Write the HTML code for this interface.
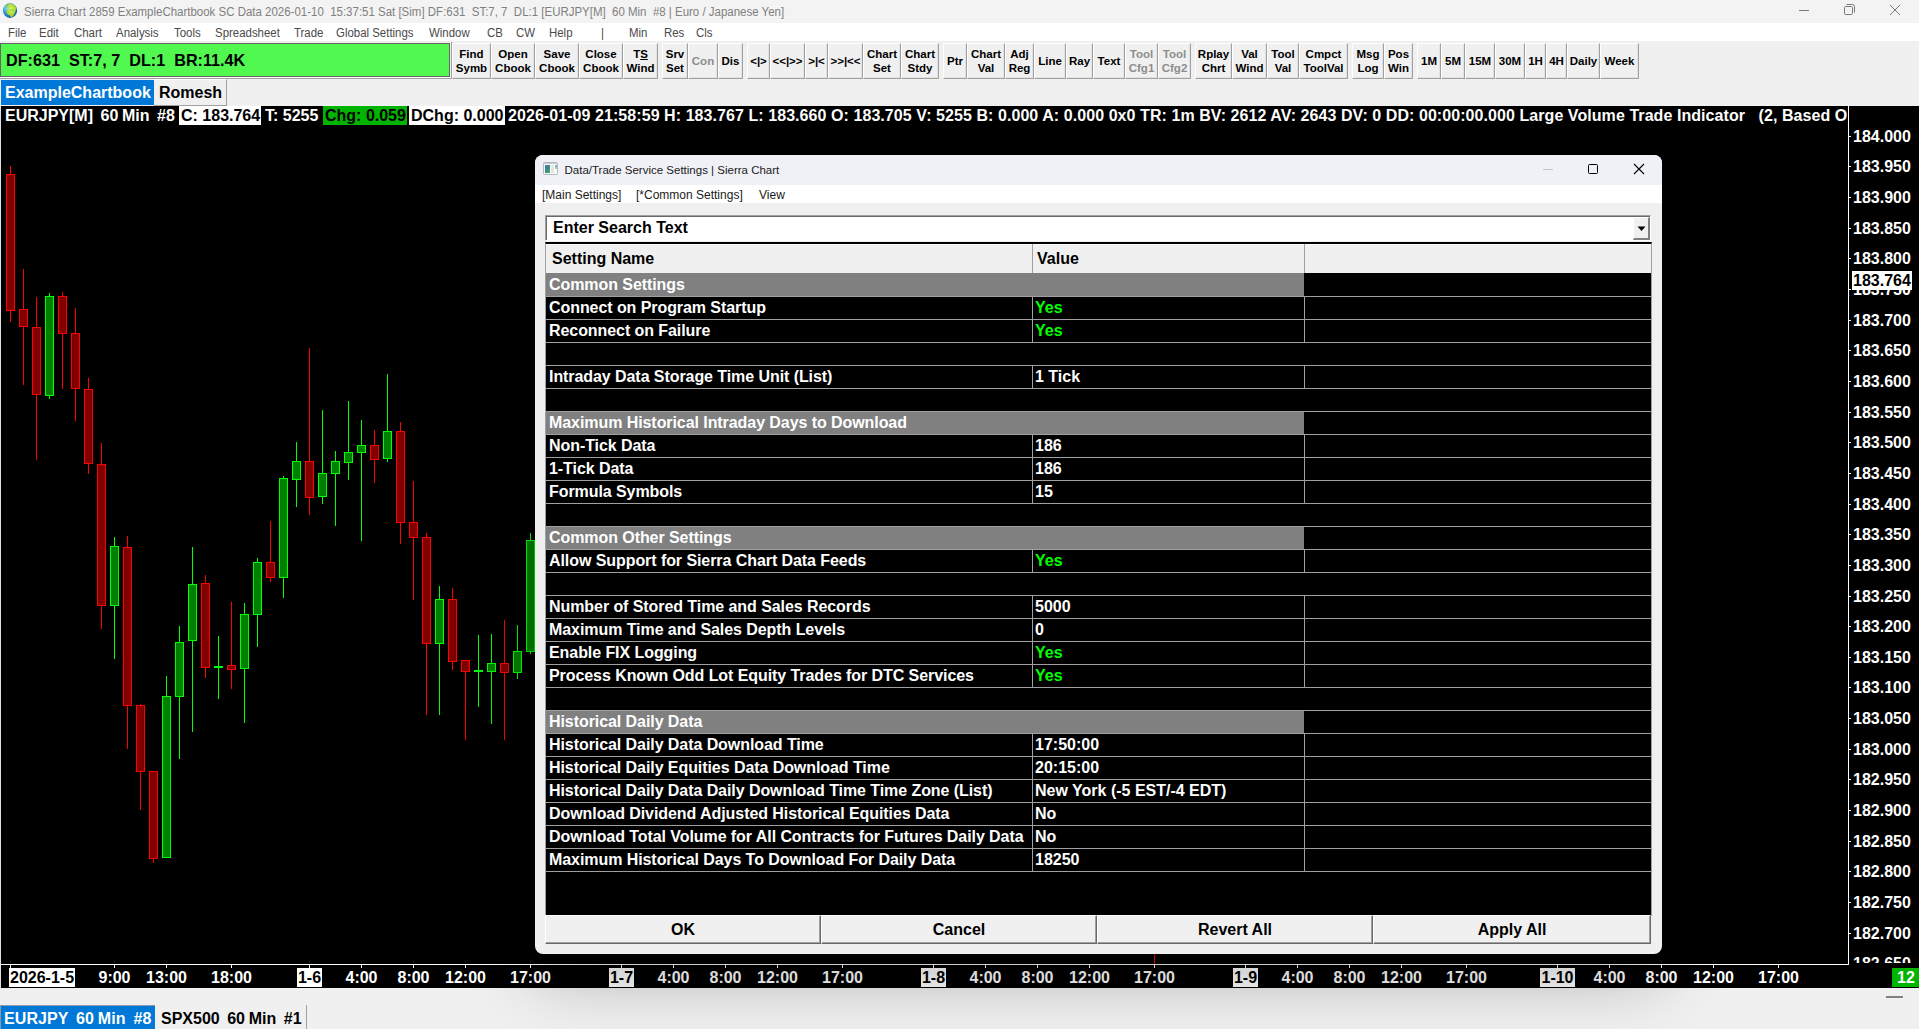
<!DOCTYPE html><html><head><meta charset="utf-8"><style>
*{margin:0;padding:0;box-sizing:border-box}
html,body{width:1919px;height:1029px;overflow:hidden;background:#f0f0f0;font-family:"Liberation Sans",sans-serif}
.a{position:absolute;white-space:pre}
.b{font-weight:bold}
.tb{position:absolute;top:43px;height:36px;background:#f0f0f0;border-left:1px solid #fff;border-top:1px solid #fff;border-right:1px solid #a0a0a0;border-bottom:1px solid #a0a0a0;box-shadow:inset -1px -1px 0 #e3e3e3;font:bold 11.5px/13.3px "Liberation Sans",sans-serif;color:#000;text-align:center;padding-top:1px;display:flex;align-items:center;justify-content:center}
.tb.g{color:#8d8d8d}
.mi{position:absolute;top:25px;font:12.3px/17px "Liberation Sans",sans-serif;color:#4a4a4a;transform:scaleX(0.93);transform-origin:0 0}
.ch{position:absolute;top:106px;height:19px;font:bold 16px/19px "Liberation Sans",sans-serif;white-space:pre}
</style></head><body>
<div class="a" style="left:0;top:0;width:1919px;height:23px;background:#f3f3f3"></div>
<svg class="a" style="left:0;top:0" width="22" height="22" viewBox="0 0 22 22"><defs><radialGradient id="gw" cx="0.3" cy="0.35" r="0.75"><stop offset="0" stop-color="#80e4ff"/><stop offset="0.45" stop-color="#2c90e0"/><stop offset="1" stop-color="#0a48a8"/></radialGradient><radialGradient id="gl" cx="0.45" cy="0.4" r="0.7"><stop offset="0" stop-color="#d8f858"/><stop offset="0.6" stop-color="#a8d830"/><stop offset="1" stop-color="#78b018"/></radialGradient></defs><ellipse cx="10" cy="10.6" rx="7.1" ry="7.3" fill="url(#gw)"/><path d="M8.6 3.6 C11.2 3.2 14.6 4.4 16.4 7.4 L16.6 9.4 C15.9 10 15.6 11 15.2 12.6 C14.5 14.6 13 16.6 11.3 17.8 C10.7 16.6 10.1 15.4 8.9 15 C7.2 14.4 6.1 13 6.5 11.4 C6.8 10 7.1 9.1 7.9 8.6 C7.4 7.6 7 6.6 7.6 5.4 Z" fill="url(#gl)"/><path d="M3.9 6.4 C4.6 5.2 5.8 4.2 7.2 3.9 C7 5 6.1 6 3.9 6.7 Z" fill="#a8d840"/><ellipse cx="11.6" cy="9.9" rx="2.1" ry="0.7" fill="#58b8b0" opacity="0.8"/></svg>
<div class="a" style="left:24px;top:4px;font:12.5px/17px 'Liberation Sans',sans-serif;color:#808080;transform:scaleX(0.918);transform-origin:0 0">Sierra Chart 2859 ExampleChartbook SC Data 2026-01-10  15:37:51 Sat [Sim] DF:631  ST:7, 7  DL:1 [EURJPY[M]  60 Min  #8 | Euro / Japanese Yen]</div>
<div class="a" style="left:1799px;top:10px;width:10px;height:1px;background:#7a7a7a"></div>
<svg class="a" style="left:1844px;top:4px" width="12" height="12" viewBox="0 0 12 12"><rect x="0.5" y="2.5" width="8" height="8" rx="1.2" fill="none" stroke="#7a7a7a" stroke-width="1"/><path d="M2.5 0.5 H8.5 Q10.5 0.5 10.5 2.5 V8.5" fill="none" stroke="#7a7a7a" stroke-width="1"/></svg>
<svg class="a" style="left:1889px;top:4px" width="12" height="12" viewBox="0 0 12 12"><path d="M1 1 L11 11 M11 1 L1 11" stroke="#7a7a7a" stroke-width="1"/></svg>
<div class="a" style="left:0;top:23px;width:1919px;height:18px;background:#fff"></div>
<div class="mi" style="left:7.5px">File</div>
<div class="mi" style="left:39.4px">Edit</div>
<div class="mi" style="left:73.5px">Chart</div>
<div class="mi" style="left:116.3px">Analysis</div>
<div class="mi" style="left:173.5px">Tools</div>
<div class="mi" style="left:215.4px">Spreadsheet</div>
<div class="mi" style="left:293.6px">Trade</div>
<div class="mi" style="left:335.8px">Global Settings</div>
<div class="mi" style="left:429px">Window</div>
<div class="mi" style="left:487.4px">CB</div>
<div class="mi" style="left:516.4px">CW</div>
<div class="mi" style="left:549.2px">Help</div>
<div class="mi" style="left:600.5px">|</div>
<div class="mi" style="left:629.2px">Min</div>
<div class="mi" style="left:664.4px">Res</div>
<div class="mi" style="left:696px">Cls</div>
<div class="a" style="left:0;top:42px;width:452px;height:37px;border-bottom:1px solid #a0a0a0;border-right:1px solid #a0a0a0;box-shadow:inset 0 -1px 0 #fff"></div>
<div class="a b" style="left:0;top:43px;width:450px;height:34px;background:#50f850;border:1px solid #646464;font:bold 16.2px/32px 'Liberation Sans',sans-serif;color:#000;padding-left:5px">DF:631  ST:7, 7  DL:1  BR:11.4K</div>
<div class="tb" style="left:452px;width:39px"><span>Find<br>Symb</span></div>
<div class="tb" style="left:491px;width:44px"><span>Open<br>Cbook</span></div>
<div class="tb" style="left:535px;width:44px"><span>Save<br>Cbook</span></div>
<div class="tb" style="left:579px;width:44px"><span>Close<br>Cbook</span></div>
<div class="tb" style="left:623px;width:35px"><span>T<u>S</u><br>Wind</span></div>
<div class="tb" style="left:662px;width:26px"><span>Srv<br>Set</span></div>
<div class="tb g" style="left:688px;width:30px"><span>Con</span></div>
<div class="tb" style="left:718px;width:25px"><span>Dis</span></div>
<div class="tb" style="left:747px;width:23px"><span>&lt;|&gt;</span></div>
<div class="tb" style="left:770px;width:35px"><span>&lt;&lt;|&gt;&gt;</span></div>
<div class="tb" style="left:805px;width:23px"><span>&gt;|&lt;</span></div>
<div class="tb" style="left:828px;width:35px"><span>&gt;&gt;|&lt;&lt;</span></div>
<div class="tb" style="left:863px;width:38px"><span>Chart<br>Set</span></div>
<div class="tb" style="left:901px;width:38px"><span>Chart<br>Stdy</span></div>
<div class="tb" style="left:943px;width:24px"><span>Ptr</span></div>
<div class="tb" style="left:967px;width:38px"><span>Chart<br>Val</span></div>
<div class="tb" style="left:1005px;width:29px"><span>Adj<br>Reg</span></div>
<div class="tb" style="left:1034px;width:32px"><span>Line</span></div>
<div class="tb" style="left:1066px;width:27px"><span>Ray</span></div>
<div class="tb" style="left:1093px;width:32px"><span>Text</span></div>
<div class="tb g" style="left:1125px;width:33px"><span>Tool<br>Cfg1</span></div>
<div class="tb g" style="left:1158px;width:33px"><span>Tool<br>Cfg2</span></div>
<div class="tb" style="left:1195px;width:37px"><span>Rplay<br>Chrt</span></div>
<div class="tb" style="left:1232px;width:35px"><span>Val<br>Wind</span></div>
<div class="tb" style="left:1267px;width:32px"><span>Tool<br>Val</span></div>
<div class="tb" style="left:1299px;width:49px"><span>Cmpct<br>ToolVal</span></div>
<div class="tb" style="left:1352px;width:32px"><span>Msg<br>Log</span></div>
<div class="tb" style="left:1384px;width:29px"><span>Pos<br>Win</span></div>
<div class="tb" style="left:1417px;width:24px"><span>1M</span></div>
<div class="tb" style="left:1441px;width:24px"><span>5M</span></div>
<div class="tb" style="left:1465px;width:30px"><span>15M</span></div>
<div class="tb" style="left:1495px;width:30px"><span>30M</span></div>
<div class="tb" style="left:1525px;width:21px"><span>1H</span></div>
<div class="tb" style="left:1546px;width:21px"><span>4H</span></div>
<div class="tb" style="left:1567px;width:33px"><span>Daily</span></div>
<div class="tb" style="left:1600px;width:39px"><span>Week</span></div>
<div class="a b" style="left:1px;top:80px;width:153px;height:25px;background:#0078d7;color:#fff;font:bold 16px/25px 'Liberation Sans',sans-serif;padding-left:4px">ExampleChartbook</div>
<div class="a b" style="left:154px;top:79px;width:73px;height:27px;background:#f0f0f0;border-right:1px solid #a0a0a0;border-bottom:1px solid #a0a0a0;border-top:1px solid #fff;color:#000;font:bold 16px/25px 'Liberation Sans',sans-serif;padding-left:5px">Romesh</div>
<div class="a" style="left:0;top:106px;width:1919px;height:882px;background:#000;border-left:1px solid #e0e0e0"></div>
<div class="ch" style="left:5px;color:#fff;word-spacing:-0.7px">EURJPY[M]  60 Min  #8</div>
<div class="ch" style="left:179px;width:82px;background:#fff;color:#000;padding-left:2px">C: 183.764</div>
<div class="ch" style="left:265px;color:#fff">T: 5255</div>
<div class="ch" style="left:323px;width:84px;background:#00b400;color:#000;padding-left:2px">Chg: 0.059</div>
<div class="ch" style="left:409px;width:96px;background:#fff;color:#000;padding-left:2px">DChg: 0.000</div>
<div class="ch" style="left:508px;width:1340px;overflow:hidden;color:#fff;letter-spacing:0.067px">2026-01-09 21:58:59 H: 183.767 L: 183.660 O: 183.705 V: 5255 B: 0.000 A: 0.000 0x0 TR: 1m BV: 2612 AV: 2643 DV: 0 DD: 00:00:00.000 Large Volume Trade Indicator   (2, Based On Volume)</div>
<svg class="a" style="left:0;top:0" width="1919" height="988" shape-rendering="crispEdges"><rect x="10" y="166" width="1" height="156" fill="#ff0000"/><rect x="6" y="174" width="9" height="137" fill="#ff0000"/><rect x="7" y="175" width="7" height="135" fill="#800000"/><rect x="23" y="269" width="1" height="116" fill="#ff0000"/><rect x="19" y="309" width="9" height="18" fill="#ff0000"/><rect x="20" y="310" width="7" height="16" fill="#800000"/><rect x="36" y="297" width="1" height="163" fill="#ff0000"/><rect x="32" y="327" width="9" height="68" fill="#ff0000"/><rect x="33" y="328" width="7" height="66" fill="#800000"/><rect x="49" y="293" width="1" height="106" fill="#00ff00"/><rect x="45" y="296" width="9" height="100" fill="#00ff00"/><rect x="46" y="297" width="7" height="98" fill="#008000"/><rect x="62" y="292" width="1" height="97" fill="#ff0000"/><rect x="58" y="296" width="9" height="38" fill="#ff0000"/><rect x="59" y="297" width="7" height="36" fill="#800000"/><rect x="75" y="308" width="1" height="113" fill="#ff0000"/><rect x="71" y="333" width="9" height="56" fill="#ff0000"/><rect x="72" y="334" width="7" height="54" fill="#800000"/><rect x="88" y="378" width="1" height="96" fill="#ff0000"/><rect x="84" y="389" width="9" height="75" fill="#ff0000"/><rect x="85" y="390" width="7" height="73" fill="#800000"/><rect x="101" y="443" width="1" height="186" fill="#ff0000"/><rect x="97" y="464" width="9" height="142" fill="#ff0000"/><rect x="98" y="465" width="7" height="140" fill="#800000"/><rect x="114" y="537" width="1" height="122" fill="#00ff00"/><rect x="110" y="546" width="9" height="60" fill="#00ff00"/><rect x="111" y="547" width="7" height="58" fill="#008000"/><rect x="127" y="536" width="1" height="213" fill="#ff0000"/><rect x="123" y="547" width="9" height="159" fill="#ff0000"/><rect x="124" y="548" width="7" height="157" fill="#800000"/><rect x="140" y="704" width="1" height="106" fill="#ff0000"/><rect x="136" y="705" width="9" height="67" fill="#ff0000"/><rect x="137" y="706" width="7" height="65" fill="#800000"/><rect x="153" y="771" width="1" height="92" fill="#ff0000"/><rect x="149" y="771" width="9" height="88" fill="#ff0000"/><rect x="150" y="772" width="7" height="86" fill="#800000"/><rect x="166" y="676" width="1" height="182" fill="#00ff00"/><rect x="162" y="696" width="9" height="162" fill="#00ff00"/><rect x="163" y="697" width="7" height="160" fill="#008000"/><rect x="179" y="626" width="1" height="133" fill="#00ff00"/><rect x="175" y="642" width="9" height="55" fill="#00ff00"/><rect x="176" y="643" width="7" height="53" fill="#008000"/><rect x="192" y="547" width="1" height="185" fill="#00ff00"/><rect x="188" y="584" width="9" height="57" fill="#00ff00"/><rect x="189" y="585" width="7" height="55" fill="#008000"/><rect x="205" y="575" width="1" height="103" fill="#ff0000"/><rect x="201" y="583" width="9" height="85" fill="#ff0000"/><rect x="202" y="584" width="7" height="83" fill="#800000"/><rect x="218" y="636" width="1" height="63" fill="#00ff00"/><rect x="214" y="666" width="9" height="2" fill="#00ff00"/><rect x="231" y="602" width="1" height="87" fill="#ff0000"/><rect x="227" y="665" width="9" height="5" fill="#ff0000"/><rect x="228" y="666" width="7" height="3" fill="#800000"/><rect x="244" y="603" width="1" height="120" fill="#00ff00"/><rect x="240" y="614" width="9" height="55" fill="#00ff00"/><rect x="241" y="615" width="7" height="53" fill="#008000"/><rect x="257" y="558" width="1" height="89" fill="#00ff00"/><rect x="253" y="562" width="9" height="53" fill="#00ff00"/><rect x="254" y="563" width="7" height="51" fill="#008000"/><rect x="270" y="521" width="1" height="61" fill="#ff0000"/><rect x="266" y="562" width="9" height="16" fill="#ff0000"/><rect x="267" y="563" width="7" height="14" fill="#800000"/><rect x="283" y="476" width="1" height="122" fill="#00ff00"/><rect x="279" y="478" width="9" height="100" fill="#00ff00"/><rect x="280" y="479" width="7" height="98" fill="#008000"/><rect x="296" y="442" width="1" height="65" fill="#00ff00"/><rect x="292" y="461" width="9" height="19" fill="#00ff00"/><rect x="293" y="462" width="7" height="17" fill="#008000"/><rect x="309" y="348" width="1" height="167" fill="#ff0000"/><rect x="305" y="461" width="9" height="37" fill="#ff0000"/><rect x="306" y="462" width="7" height="35" fill="#800000"/><rect x="322" y="410" width="1" height="94" fill="#00ff00"/><rect x="318" y="473" width="9" height="24" fill="#00ff00"/><rect x="319" y="474" width="7" height="22" fill="#008000"/><rect x="335" y="451" width="1" height="75" fill="#00ff00"/><rect x="331" y="461" width="9" height="13" fill="#00ff00"/><rect x="332" y="462" width="7" height="11" fill="#008000"/><rect x="348" y="401" width="1" height="79" fill="#00ff00"/><rect x="344" y="452" width="9" height="11" fill="#00ff00"/><rect x="345" y="453" width="7" height="9" fill="#008000"/><rect x="361" y="420" width="1" height="121" fill="#00ff00"/><rect x="357" y="445" width="9" height="8" fill="#00ff00"/><rect x="358" y="446" width="7" height="6" fill="#008000"/><rect x="374" y="430" width="1" height="53" fill="#ff0000"/><rect x="370" y="445" width="9" height="15" fill="#ff0000"/><rect x="371" y="446" width="7" height="13" fill="#800000"/><rect x="387" y="374" width="1" height="88" fill="#00ff00"/><rect x="383" y="431" width="9" height="28" fill="#00ff00"/><rect x="384" y="432" width="7" height="26" fill="#008000"/><rect x="400" y="422" width="1" height="122" fill="#ff0000"/><rect x="396" y="431" width="9" height="92" fill="#ff0000"/><rect x="397" y="432" width="7" height="90" fill="#800000"/><rect x="413" y="481" width="1" height="119" fill="#ff0000"/><rect x="409" y="522" width="9" height="16" fill="#ff0000"/><rect x="410" y="523" width="7" height="14" fill="#800000"/><rect x="426" y="533" width="1" height="182" fill="#ff0000"/><rect x="422" y="537" width="9" height="107" fill="#ff0000"/><rect x="423" y="538" width="7" height="105" fill="#800000"/><rect x="439" y="586" width="1" height="129" fill="#00ff00"/><rect x="435" y="599" width="9" height="45" fill="#00ff00"/><rect x="436" y="600" width="7" height="43" fill="#008000"/><rect x="452" y="588" width="1" height="82" fill="#ff0000"/><rect x="448" y="599" width="9" height="63" fill="#ff0000"/><rect x="449" y="600" width="7" height="61" fill="#800000"/><rect x="465" y="660" width="1" height="80" fill="#ff0000"/><rect x="461" y="660" width="9" height="12" fill="#ff0000"/><rect x="462" y="661" width="7" height="10" fill="#800000"/><rect x="478" y="635" width="1" height="72" fill="#00ff00"/><rect x="474" y="670" width="9" height="2" fill="#00ff00"/><rect x="491" y="634" width="1" height="90" fill="#00ff00"/><rect x="487" y="663" width="9" height="9" fill="#00ff00"/><rect x="488" y="664" width="7" height="7" fill="#008000"/><rect x="504" y="620" width="1" height="120" fill="#ff0000"/><rect x="500" y="663" width="9" height="10" fill="#ff0000"/><rect x="501" y="664" width="7" height="8" fill="#800000"/><rect x="517" y="625" width="1" height="54" fill="#00ff00"/><rect x="513" y="651" width="9" height="22" fill="#00ff00"/><rect x="514" y="652" width="7" height="20" fill="#008000"/><rect x="530" y="533" width="1" height="121" fill="#00ff00"/><rect x="526" y="540" width="9" height="112" fill="#00ff00"/><rect x="527" y="541" width="7" height="110" fill="#008000"/><rect x="1154" y="930" width="1" height="34" fill="#ff0000"/><rect x="1848" y="106" width="1" height="859" fill="#fff"/><rect x="1" y="964" width="1848" height="1" fill="#fff"/></svg>
<div class="a" style="left:1848px;top:136px;width:3px;height:1px;background:#fff"></div>
<div class="a b" style="left:1853px;top:127px;font:bold 16px/19px 'Liberation Sans',sans-serif;color:#fff">184.000</div>
<div class="a" style="left:1848px;top:166px;width:3px;height:1px;background:#fff"></div>
<div class="a b" style="left:1853px;top:157px;font:bold 16px/19px 'Liberation Sans',sans-serif;color:#fff">183.950</div>
<div class="a" style="left:1848px;top:197px;width:3px;height:1px;background:#fff"></div>
<div class="a b" style="left:1853px;top:188px;font:bold 16px/19px 'Liberation Sans',sans-serif;color:#fff">183.900</div>
<div class="a" style="left:1848px;top:228px;width:3px;height:1px;background:#fff"></div>
<div class="a b" style="left:1853px;top:219px;font:bold 16px/19px 'Liberation Sans',sans-serif;color:#fff">183.850</div>
<div class="a" style="left:1848px;top:258px;width:3px;height:1px;background:#fff"></div>
<div class="a b" style="left:1853px;top:249px;font:bold 16px/19px 'Liberation Sans',sans-serif;color:#fff">183.800</div>
<div class="a" style="left:1848px;top:289px;width:3px;height:1px;background:#fff"></div>
<div class="a b" style="left:1853px;top:280px;font:bold 16px/19px 'Liberation Sans',sans-serif;color:#fff">183.750</div>
<div class="a" style="left:1848px;top:320px;width:3px;height:1px;background:#fff"></div>
<div class="a b" style="left:1853px;top:311px;font:bold 16px/19px 'Liberation Sans',sans-serif;color:#fff">183.700</div>
<div class="a" style="left:1848px;top:350px;width:3px;height:1px;background:#fff"></div>
<div class="a b" style="left:1853px;top:341px;font:bold 16px/19px 'Liberation Sans',sans-serif;color:#fff">183.650</div>
<div class="a" style="left:1848px;top:381px;width:3px;height:1px;background:#fff"></div>
<div class="a b" style="left:1853px;top:372px;font:bold 16px/19px 'Liberation Sans',sans-serif;color:#fff">183.600</div>
<div class="a" style="left:1848px;top:412px;width:3px;height:1px;background:#fff"></div>
<div class="a b" style="left:1853px;top:403px;font:bold 16px/19px 'Liberation Sans',sans-serif;color:#fff">183.550</div>
<div class="a" style="left:1848px;top:442px;width:3px;height:1px;background:#fff"></div>
<div class="a b" style="left:1853px;top:433px;font:bold 16px/19px 'Liberation Sans',sans-serif;color:#fff">183.500</div>
<div class="a" style="left:1848px;top:473px;width:3px;height:1px;background:#fff"></div>
<div class="a b" style="left:1853px;top:464px;font:bold 16px/19px 'Liberation Sans',sans-serif;color:#fff">183.450</div>
<div class="a" style="left:1848px;top:504px;width:3px;height:1px;background:#fff"></div>
<div class="a b" style="left:1853px;top:495px;font:bold 16px/19px 'Liberation Sans',sans-serif;color:#fff">183.400</div>
<div class="a" style="left:1848px;top:534px;width:3px;height:1px;background:#fff"></div>
<div class="a b" style="left:1853px;top:525px;font:bold 16px/19px 'Liberation Sans',sans-serif;color:#fff">183.350</div>
<div class="a" style="left:1848px;top:565px;width:3px;height:1px;background:#fff"></div>
<div class="a b" style="left:1853px;top:556px;font:bold 16px/19px 'Liberation Sans',sans-serif;color:#fff">183.300</div>
<div class="a" style="left:1848px;top:596px;width:3px;height:1px;background:#fff"></div>
<div class="a b" style="left:1853px;top:587px;font:bold 16px/19px 'Liberation Sans',sans-serif;color:#fff">183.250</div>
<div class="a" style="left:1848px;top:626px;width:3px;height:1px;background:#fff"></div>
<div class="a b" style="left:1853px;top:617px;font:bold 16px/19px 'Liberation Sans',sans-serif;color:#fff">183.200</div>
<div class="a" style="left:1848px;top:657px;width:3px;height:1px;background:#fff"></div>
<div class="a b" style="left:1853px;top:648px;font:bold 16px/19px 'Liberation Sans',sans-serif;color:#fff">183.150</div>
<div class="a" style="left:1848px;top:687px;width:3px;height:1px;background:#fff"></div>
<div class="a b" style="left:1853px;top:678px;font:bold 16px/19px 'Liberation Sans',sans-serif;color:#fff">183.100</div>
<div class="a" style="left:1848px;top:718px;width:3px;height:1px;background:#fff"></div>
<div class="a b" style="left:1853px;top:709px;font:bold 16px/19px 'Liberation Sans',sans-serif;color:#fff">183.050</div>
<div class="a" style="left:1848px;top:749px;width:3px;height:1px;background:#fff"></div>
<div class="a b" style="left:1853px;top:740px;font:bold 16px/19px 'Liberation Sans',sans-serif;color:#fff">183.000</div>
<div class="a" style="left:1848px;top:779px;width:3px;height:1px;background:#fff"></div>
<div class="a b" style="left:1853px;top:770px;font:bold 16px/19px 'Liberation Sans',sans-serif;color:#fff">182.950</div>
<div class="a" style="left:1848px;top:810px;width:3px;height:1px;background:#fff"></div>
<div class="a b" style="left:1853px;top:801px;font:bold 16px/19px 'Liberation Sans',sans-serif;color:#fff">182.900</div>
<div class="a" style="left:1848px;top:841px;width:3px;height:1px;background:#fff"></div>
<div class="a b" style="left:1853px;top:832px;font:bold 16px/19px 'Liberation Sans',sans-serif;color:#fff">182.850</div>
<div class="a" style="left:1848px;top:871px;width:3px;height:1px;background:#fff"></div>
<div class="a b" style="left:1853px;top:862px;font:bold 16px/19px 'Liberation Sans',sans-serif;color:#fff">182.800</div>
<div class="a" style="left:1848px;top:902px;width:3px;height:1px;background:#fff"></div>
<div class="a b" style="left:1853px;top:893px;font:bold 16px/19px 'Liberation Sans',sans-serif;color:#fff">182.750</div>
<div class="a" style="left:1848px;top:933px;width:3px;height:1px;background:#fff"></div>
<div class="a b" style="left:1853px;top:924px;font:bold 16px/19px 'Liberation Sans',sans-serif;color:#fff">182.700</div>
<div class="a" style="left:1848px;top:963px;width:3px;height:1px;background:#fff"></div>
<div class="a b" style="left:1853px;top:954px;font:bold 16px/19px 'Liberation Sans',sans-serif;color:#fff">182.650</div>
<div class="a" style="left:1849px;top:963px;width:70px;height:25px;background:#000"></div>
<div class="a" style="left:1852px;top:271px;width:60px;height:19px;background:#fff;color:#000;font:bold 16px/19px 'Liberation Sans',sans-serif;padding-left:1px">183.764</div>
<div class="a" style="left:10px;top:965px;width:1px;height:3px;background:#fff"></div>
<div class="a" style="left:9px;top:968px;height:19px;background:#fff;color:#000;font:bold 16px/19px 'Liberation Sans',sans-serif;padding:0 1px">2026-1-5</div>
<div class="a" style="left:114px;top:965px;width:1px;height:3px;background:#fff"></div>
<div class="a" style="left:74.5px;top:968px;width:80px;height:19px;text-align:center;color:#fff;font:bold 16px/19px 'Liberation Sans',sans-serif">9:00</div>
<div class="a" style="left:166px;top:965px;width:1px;height:3px;background:#fff"></div>
<div class="a" style="left:126.5px;top:968px;width:80px;height:19px;text-align:center;color:#fff;font:bold 16px/19px 'Liberation Sans',sans-serif">13:00</div>
<div class="a" style="left:231px;top:965px;width:1px;height:3px;background:#fff"></div>
<div class="a" style="left:191.5px;top:968px;width:80px;height:19px;text-align:center;color:#fff;font:bold 16px/19px 'Liberation Sans',sans-serif">18:00</div>
<div class="a" style="left:309px;top:965px;width:1px;height:3px;background:#fff"></div>
<div class="a" style="left:269.5px;top:968px;width:80px;height:19px;text-align:center"><span style="display:inline-block;background:#fff;color:#000;font:bold 16px/19px 'Liberation Sans',sans-serif;padding:0 1px">1-6</span></div>
<div class="a" style="left:361px;top:965px;width:1px;height:3px;background:#fff"></div>
<div class="a" style="left:321.5px;top:968px;width:80px;height:19px;text-align:center;color:#fff;font:bold 16px/19px 'Liberation Sans',sans-serif">4:00</div>
<div class="a" style="left:413px;top:965px;width:1px;height:3px;background:#fff"></div>
<div class="a" style="left:373.5px;top:968px;width:80px;height:19px;text-align:center;color:#fff;font:bold 16px/19px 'Liberation Sans',sans-serif">8:00</div>
<div class="a" style="left:465px;top:965px;width:1px;height:3px;background:#fff"></div>
<div class="a" style="left:425.5px;top:968px;width:80px;height:19px;text-align:center;color:#fff;font:bold 16px/19px 'Liberation Sans',sans-serif">12:00</div>
<div class="a" style="left:530px;top:965px;width:1px;height:3px;background:#fff"></div>
<div class="a" style="left:490.5px;top:968px;width:80px;height:19px;text-align:center;color:#fff;font:bold 16px/19px 'Liberation Sans',sans-serif">17:00</div>
<div class="a" style="left:621px;top:965px;width:1px;height:3px;background:#fff"></div>
<div class="a" style="left:581.5px;top:968px;width:80px;height:19px;text-align:center"><span style="display:inline-block;background:#fff;color:#000;font:bold 16px/19px 'Liberation Sans',sans-serif;padding:0 1px">1-7</span></div>
<div class="a" style="left:673px;top:965px;width:1px;height:3px;background:#fff"></div>
<div class="a" style="left:633.5px;top:968px;width:80px;height:19px;text-align:center;color:#fff;font:bold 16px/19px 'Liberation Sans',sans-serif">4:00</div>
<div class="a" style="left:725px;top:965px;width:1px;height:3px;background:#fff"></div>
<div class="a" style="left:685.5px;top:968px;width:80px;height:19px;text-align:center;color:#fff;font:bold 16px/19px 'Liberation Sans',sans-serif">8:00</div>
<div class="a" style="left:777px;top:965px;width:1px;height:3px;background:#fff"></div>
<div class="a" style="left:737.5px;top:968px;width:80px;height:19px;text-align:center;color:#fff;font:bold 16px/19px 'Liberation Sans',sans-serif">12:00</div>
<div class="a" style="left:842px;top:965px;width:1px;height:3px;background:#fff"></div>
<div class="a" style="left:802.5px;top:968px;width:80px;height:19px;text-align:center;color:#fff;font:bold 16px/19px 'Liberation Sans',sans-serif">17:00</div>
<div class="a" style="left:933px;top:965px;width:1px;height:3px;background:#fff"></div>
<div class="a" style="left:893.5px;top:968px;width:80px;height:19px;text-align:center"><span style="display:inline-block;background:#fff;color:#000;font:bold 16px/19px 'Liberation Sans',sans-serif;padding:0 1px">1-8</span></div>
<div class="a" style="left:985px;top:965px;width:1px;height:3px;background:#fff"></div>
<div class="a" style="left:945.5px;top:968px;width:80px;height:19px;text-align:center;color:#fff;font:bold 16px/19px 'Liberation Sans',sans-serif">4:00</div>
<div class="a" style="left:1037px;top:965px;width:1px;height:3px;background:#fff"></div>
<div class="a" style="left:997.5px;top:968px;width:80px;height:19px;text-align:center;color:#fff;font:bold 16px/19px 'Liberation Sans',sans-serif">8:00</div>
<div class="a" style="left:1089px;top:965px;width:1px;height:3px;background:#fff"></div>
<div class="a" style="left:1049.5px;top:968px;width:80px;height:19px;text-align:center;color:#fff;font:bold 16px/19px 'Liberation Sans',sans-serif">12:00</div>
<div class="a" style="left:1154px;top:965px;width:1px;height:3px;background:#fff"></div>
<div class="a" style="left:1114.5px;top:968px;width:80px;height:19px;text-align:center;color:#fff;font:bold 16px/19px 'Liberation Sans',sans-serif">17:00</div>
<div class="a" style="left:1245px;top:965px;width:1px;height:3px;background:#fff"></div>
<div class="a" style="left:1205.5px;top:968px;width:80px;height:19px;text-align:center"><span style="display:inline-block;background:#fff;color:#000;font:bold 16px/19px 'Liberation Sans',sans-serif;padding:0 1px">1-9</span></div>
<div class="a" style="left:1297px;top:965px;width:1px;height:3px;background:#fff"></div>
<div class="a" style="left:1257.5px;top:968px;width:80px;height:19px;text-align:center;color:#fff;font:bold 16px/19px 'Liberation Sans',sans-serif">4:00</div>
<div class="a" style="left:1349px;top:965px;width:1px;height:3px;background:#fff"></div>
<div class="a" style="left:1309.5px;top:968px;width:80px;height:19px;text-align:center;color:#fff;font:bold 16px/19px 'Liberation Sans',sans-serif">8:00</div>
<div class="a" style="left:1401px;top:965px;width:1px;height:3px;background:#fff"></div>
<div class="a" style="left:1361.5px;top:968px;width:80px;height:19px;text-align:center;color:#fff;font:bold 16px/19px 'Liberation Sans',sans-serif">12:00</div>
<div class="a" style="left:1466px;top:965px;width:1px;height:3px;background:#fff"></div>
<div class="a" style="left:1426.5px;top:968px;width:80px;height:19px;text-align:center;color:#fff;font:bold 16px/19px 'Liberation Sans',sans-serif">17:00</div>
<div class="a" style="left:1557px;top:965px;width:1px;height:3px;background:#fff"></div>
<div class="a" style="left:1517.5px;top:968px;width:80px;height:19px;text-align:center"><span style="display:inline-block;background:#fff;color:#000;font:bold 16px/19px 'Liberation Sans',sans-serif;padding:0 1px">1-10</span></div>
<div class="a" style="left:1609px;top:965px;width:1px;height:3px;background:#fff"></div>
<div class="a" style="left:1569.5px;top:968px;width:80px;height:19px;text-align:center;color:#fff;font:bold 16px/19px 'Liberation Sans',sans-serif">4:00</div>
<div class="a" style="left:1661px;top:965px;width:1px;height:3px;background:#fff"></div>
<div class="a" style="left:1621.5px;top:968px;width:80px;height:19px;text-align:center;color:#fff;font:bold 16px/19px 'Liberation Sans',sans-serif">8:00</div>
<div class="a" style="left:1713px;top:965px;width:1px;height:3px;background:#fff"></div>
<div class="a" style="left:1673.5px;top:968px;width:80px;height:19px;text-align:center;color:#fff;font:bold 16px/19px 'Liberation Sans',sans-serif">12:00</div>
<div class="a" style="left:1778px;top:965px;width:1px;height:3px;background:#fff"></div>
<div class="a" style="left:1738.5px;top:968px;width:80px;height:19px;text-align:center;color:#fff;font:bold 16px/19px 'Liberation Sans',sans-serif">17:00</div>
<div class="a" style="left:1892px;top:968px;width:27px;height:19px;background:#00b400;color:#fff;font:bold 16px/19px 'Liberation Sans',sans-serif;padding-left:5px">12</div>
<div class="a" style="left:1886px;top:996px;width:17px;height:2px;background:#808080"></div>
<div class="a" style="left:0;top:1005px;width:155px;height:24px;background:#0078d7;color:#fff;font:bold 16px/26px 'Liberation Sans',sans-serif;padding-left:3px;letter-spacing:0.1px;word-spacing:-0.7px;border-top:1px solid #8a9aaa;border-left:1px solid #8a9aaa">EURJPY  60 Min  #8</div>
<div class="a" style="left:161px;top:1005px;color:#000;font:bold 16px/27px 'Liberation Sans',sans-serif;word-spacing:-0.7px">SPX500  60 Min  #1</div>
<div class="a" style="left:306px;top:1005px;width:1px;height:24px;background:#a0a0a0"></div>
<div class="a" style="left:535px;top:155px;width:1127px;height:799px;background:#f0f0f0;border-radius:8px;box-shadow:0 20px 70px rgba(0,0,0,0.30), 0 0 0 1px rgba(0,0,0,0.10);overflow:hidden">
<div class="a" style="left:0;top:0;width:1127px;height:30px;background:#f0f1f7"></div>
<svg class="a" style="left:8px;top:7px" width="15" height="13" viewBox="0 0 15 13"><defs><linearGradient id="ig" x1="0" y1="0" x2="1" y2="1"><stop offset="0" stop-color="#4a7ab8"/><stop offset="0.5" stop-color="#3a8a88"/><stop offset="1" stop-color="#50b060"/></linearGradient><linearGradient id="ig2" x1="0" y1="0" x2="0" y2="1"><stop offset="0" stop-color="#7aa0d0"/><stop offset="1" stop-color="#b0e0a0"/></linearGradient></defs><rect x="0.5" y="0.5" width="14" height="12" rx="1" fill="#fafafa" stroke="#b4b8be"/><rect x="1" y="1" width="13" height="1" fill="#c4c8ce"/><rect x="2" y="3" width="5" height="8" fill="url(#ig)"/><rect x="8" y="3" width="3" height="8" fill="#e4e4e4"/><rect x="12" y="3" width="2" height="4" fill="url(#ig2)"/></svg>
<div class="a" style="left:29.5px;top:7px;font:11.5px/16px 'Liberation Sans',sans-serif;color:#1a1a1a">Data/Trade Service Settings | Sierra Chart</div>
<div class="a" style="left:1008px;top:14px;width:10px;height:1px;background:#c4c4c4"></div>
<svg class="a" style="left:1053px;top:9px" width="11" height="11" viewBox="0 0 11 11"><rect x="0.5" y="0.5" width="9" height="9" rx="1" fill="none" stroke="#000" stroke-width="1"/></svg>
<svg class="a" style="left:1098px;top:8px" width="12" height="12" viewBox="0 0 12 12"><path d="M1 1 L11 11 M11 1 L1 11" stroke="#000" stroke-width="1.1"/></svg>
<div class="a" style="left:0;top:30px;width:1127px;height:18px;background:#fff"></div>
<div class="a" style="left:7px;top:32px;font:12px/16px 'Liberation Sans',sans-serif;color:#1a1a1a">[Main Settings]</div>
<div class="a" style="left:101px;top:32px;font:12px/16px 'Liberation Sans',sans-serif;color:#1a1a1a">[*Common Settings]</div>
<div class="a" style="left:224px;top:32px;font:12px/16px 'Liberation Sans',sans-serif;color:#1a1a1a">View</div>
<div class="a" style="left:10px;top:60px;width:1106px;height:26px;background:#fff;border-top:1px solid #a0a0a0;border-left:1px solid #a0a0a0;border-right:1px solid #fff;border-bottom:1px solid #fff;box-shadow:inset 1px 1px 0 #696969"></div>
<div class="a" style="left:18px;top:63px;font:bold 16px/19px 'Liberation Sans',sans-serif;color:#000">Enter Search Text</div>
<div class="a" style="left:1098px;top:62px;width:17px;height:23px;background:#f0f0f0;border-left:1px solid #fff;border-top:1px solid #fff;border-right:2px solid #808080;border-bottom:2px solid #808080"></div>
<svg class="a" style="left:1101px;top:71px" width="11" height="6" viewBox="0 0 11 6"><path d="M1.5 0.5 H9.5 L5.5 5 Z" fill="#000"/></svg>
<div class="a" style="left:10px;top:87px;width:1107px;height:674px;background:#000;border-top:2px solid #000;border-left:1px solid #a0a0a0;border-right:1px solid #a0a0a0"></div>
<div class="a" style="left:11px;top:89px;width:1105px;height:29px;background:#f0f0f0;border-top:1px solid #fff"></div>
<div class="a" style="left:497px;top:89px;width:1px;height:29px;background:#a0a0a0"></div>
<div class="a" style="left:769px;top:89px;width:1px;height:29px;background:#a0a0a0"></div>
<div class="a b" style="left:17px;top:94px;font:bold 16px/19px 'Liberation Sans',sans-serif;color:#000">Setting Name</div>
<div class="a b" style="left:502px;top:94px;font:bold 16px/19px 'Liberation Sans',sans-serif;color:#000">Value</div>
<div class="a" style="left:11px;top:141px;width:1105px;height:1px;background:#a0a0a0"></div>
<div class="a" style="left:11px;top:118px;width:758px;height:23px;background:#808080"></div>
<div class="a" style="left:14px;top:119px;font:bold 16px/22px 'Liberation Sans',sans-serif;color:#fff;letter-spacing:-0.07px">Common Settings</div>
<div class="a" style="left:11px;top:164px;width:1105px;height:1px;background:#a0a0a0"></div>
<div class="a" style="left:497px;top:142px;width:1px;height:22px;background:#a0a0a0"></div>
<div class="a" style="left:769px;top:142px;width:1px;height:22px;background:#a0a0a0"></div>
<div class="a" style="left:14px;top:142px;font:bold 16px/22px 'Liberation Sans',sans-serif;color:#fff;letter-spacing:-0.07px">Connect on Program Startup</div>
<div class="a" style="left:500px;top:142px;font:bold 16px/22px 'Liberation Sans',sans-serif;color:#00ff00">Yes</div>
<div class="a" style="left:11px;top:187px;width:1105px;height:1px;background:#a0a0a0"></div>
<div class="a" style="left:497px;top:165px;width:1px;height:22px;background:#a0a0a0"></div>
<div class="a" style="left:769px;top:165px;width:1px;height:22px;background:#a0a0a0"></div>
<div class="a" style="left:14px;top:165px;font:bold 16px/22px 'Liberation Sans',sans-serif;color:#fff;letter-spacing:-0.07px">Reconnect on Failure</div>
<div class="a" style="left:500px;top:165px;font:bold 16px/22px 'Liberation Sans',sans-serif;color:#00ff00">Yes</div>
<div class="a" style="left:11px;top:210px;width:1105px;height:1px;background:#a0a0a0"></div>
<div class="a" style="left:11px;top:233px;width:1105px;height:1px;background:#a0a0a0"></div>
<div class="a" style="left:497px;top:211px;width:1px;height:22px;background:#a0a0a0"></div>
<div class="a" style="left:769px;top:211px;width:1px;height:22px;background:#a0a0a0"></div>
<div class="a" style="left:14px;top:211px;font:bold 16px/22px 'Liberation Sans',sans-serif;color:#fff;letter-spacing:-0.07px">Intraday Data Storage Time Unit (List)</div>
<div class="a" style="left:500px;top:211px;font:bold 16px/22px 'Liberation Sans',sans-serif;color:#fff">1 Tick</div>
<div class="a" style="left:11px;top:256px;width:1105px;height:1px;background:#a0a0a0"></div>
<div class="a" style="left:11px;top:279px;width:1105px;height:1px;background:#a0a0a0"></div>
<div class="a" style="left:11px;top:257px;width:758px;height:22px;background:#808080"></div>
<div class="a" style="left:14px;top:257px;font:bold 16px/22px 'Liberation Sans',sans-serif;color:#fff;letter-spacing:-0.07px">Maximum Historical Intraday Days to Download</div>
<div class="a" style="left:11px;top:302px;width:1105px;height:1px;background:#a0a0a0"></div>
<div class="a" style="left:497px;top:280px;width:1px;height:22px;background:#a0a0a0"></div>
<div class="a" style="left:769px;top:280px;width:1px;height:22px;background:#a0a0a0"></div>
<div class="a" style="left:14px;top:280px;font:bold 16px/22px 'Liberation Sans',sans-serif;color:#fff;letter-spacing:-0.07px">Non-Tick Data</div>
<div class="a" style="left:500px;top:280px;font:bold 16px/22px 'Liberation Sans',sans-serif;color:#fff">186</div>
<div class="a" style="left:11px;top:325px;width:1105px;height:1px;background:#a0a0a0"></div>
<div class="a" style="left:497px;top:303px;width:1px;height:22px;background:#a0a0a0"></div>
<div class="a" style="left:769px;top:303px;width:1px;height:22px;background:#a0a0a0"></div>
<div class="a" style="left:14px;top:303px;font:bold 16px/22px 'Liberation Sans',sans-serif;color:#fff;letter-spacing:-0.07px">1-Tick Data</div>
<div class="a" style="left:500px;top:303px;font:bold 16px/22px 'Liberation Sans',sans-serif;color:#fff">186</div>
<div class="a" style="left:11px;top:348px;width:1105px;height:1px;background:#a0a0a0"></div>
<div class="a" style="left:497px;top:326px;width:1px;height:22px;background:#a0a0a0"></div>
<div class="a" style="left:769px;top:326px;width:1px;height:22px;background:#a0a0a0"></div>
<div class="a" style="left:14px;top:326px;font:bold 16px/22px 'Liberation Sans',sans-serif;color:#fff;letter-spacing:-0.07px">Formula Symbols</div>
<div class="a" style="left:500px;top:326px;font:bold 16px/22px 'Liberation Sans',sans-serif;color:#fff">15</div>
<div class="a" style="left:11px;top:371px;width:1105px;height:1px;background:#a0a0a0"></div>
<div class="a" style="left:11px;top:394px;width:1105px;height:1px;background:#a0a0a0"></div>
<div class="a" style="left:11px;top:372px;width:758px;height:22px;background:#808080"></div>
<div class="a" style="left:14px;top:372px;font:bold 16px/22px 'Liberation Sans',sans-serif;color:#fff;letter-spacing:-0.07px">Common Other Settings</div>
<div class="a" style="left:11px;top:417px;width:1105px;height:1px;background:#a0a0a0"></div>
<div class="a" style="left:497px;top:395px;width:1px;height:22px;background:#a0a0a0"></div>
<div class="a" style="left:769px;top:395px;width:1px;height:22px;background:#a0a0a0"></div>
<div class="a" style="left:14px;top:395px;font:bold 16px/22px 'Liberation Sans',sans-serif;color:#fff;letter-spacing:-0.07px">Allow Support for Sierra Chart Data Feeds</div>
<div class="a" style="left:500px;top:395px;font:bold 16px/22px 'Liberation Sans',sans-serif;color:#00ff00">Yes</div>
<div class="a" style="left:11px;top:440px;width:1105px;height:1px;background:#a0a0a0"></div>
<div class="a" style="left:11px;top:463px;width:1105px;height:1px;background:#a0a0a0"></div>
<div class="a" style="left:497px;top:441px;width:1px;height:22px;background:#a0a0a0"></div>
<div class="a" style="left:769px;top:441px;width:1px;height:22px;background:#a0a0a0"></div>
<div class="a" style="left:14px;top:441px;font:bold 16px/22px 'Liberation Sans',sans-serif;color:#fff;letter-spacing:-0.07px">Number of Stored Time and Sales Records</div>
<div class="a" style="left:500px;top:441px;font:bold 16px/22px 'Liberation Sans',sans-serif;color:#fff">5000</div>
<div class="a" style="left:11px;top:486px;width:1105px;height:1px;background:#a0a0a0"></div>
<div class="a" style="left:497px;top:464px;width:1px;height:22px;background:#a0a0a0"></div>
<div class="a" style="left:769px;top:464px;width:1px;height:22px;background:#a0a0a0"></div>
<div class="a" style="left:14px;top:464px;font:bold 16px/22px 'Liberation Sans',sans-serif;color:#fff;letter-spacing:-0.07px">Maximum Time and Sales Depth Levels</div>
<div class="a" style="left:500px;top:464px;font:bold 16px/22px 'Liberation Sans',sans-serif;color:#fff">0</div>
<div class="a" style="left:11px;top:509px;width:1105px;height:1px;background:#a0a0a0"></div>
<div class="a" style="left:497px;top:487px;width:1px;height:22px;background:#a0a0a0"></div>
<div class="a" style="left:769px;top:487px;width:1px;height:22px;background:#a0a0a0"></div>
<div class="a" style="left:14px;top:487px;font:bold 16px/22px 'Liberation Sans',sans-serif;color:#fff;letter-spacing:-0.07px">Enable FIX Logging</div>
<div class="a" style="left:500px;top:487px;font:bold 16px/22px 'Liberation Sans',sans-serif;color:#00ff00">Yes</div>
<div class="a" style="left:11px;top:532px;width:1105px;height:1px;background:#a0a0a0"></div>
<div class="a" style="left:497px;top:510px;width:1px;height:22px;background:#a0a0a0"></div>
<div class="a" style="left:769px;top:510px;width:1px;height:22px;background:#a0a0a0"></div>
<div class="a" style="left:14px;top:510px;font:bold 16px/22px 'Liberation Sans',sans-serif;color:#fff;letter-spacing:-0.07px">Process Known Odd Lot Equity Trades for DTC Services</div>
<div class="a" style="left:500px;top:510px;font:bold 16px/22px 'Liberation Sans',sans-serif;color:#00ff00">Yes</div>
<div class="a" style="left:11px;top:555px;width:1105px;height:1px;background:#a0a0a0"></div>
<div class="a" style="left:11px;top:578px;width:1105px;height:1px;background:#a0a0a0"></div>
<div class="a" style="left:11px;top:556px;width:758px;height:22px;background:#808080"></div>
<div class="a" style="left:14px;top:556px;font:bold 16px/22px 'Liberation Sans',sans-serif;color:#fff;letter-spacing:-0.07px">Historical Daily Data</div>
<div class="a" style="left:11px;top:601px;width:1105px;height:1px;background:#a0a0a0"></div>
<div class="a" style="left:497px;top:579px;width:1px;height:22px;background:#a0a0a0"></div>
<div class="a" style="left:769px;top:579px;width:1px;height:22px;background:#a0a0a0"></div>
<div class="a" style="left:14px;top:579px;font:bold 16px/22px 'Liberation Sans',sans-serif;color:#fff;letter-spacing:-0.07px">Historical Daily Data Download Time</div>
<div class="a" style="left:500px;top:579px;font:bold 16px/22px 'Liberation Sans',sans-serif;color:#fff">17:50:00</div>
<div class="a" style="left:11px;top:624px;width:1105px;height:1px;background:#a0a0a0"></div>
<div class="a" style="left:497px;top:602px;width:1px;height:22px;background:#a0a0a0"></div>
<div class="a" style="left:769px;top:602px;width:1px;height:22px;background:#a0a0a0"></div>
<div class="a" style="left:14px;top:602px;font:bold 16px/22px 'Liberation Sans',sans-serif;color:#fff;letter-spacing:-0.07px">Historical Daily Equities Data Download Time</div>
<div class="a" style="left:500px;top:602px;font:bold 16px/22px 'Liberation Sans',sans-serif;color:#fff">20:15:00</div>
<div class="a" style="left:11px;top:647px;width:1105px;height:1px;background:#a0a0a0"></div>
<div class="a" style="left:497px;top:625px;width:1px;height:22px;background:#a0a0a0"></div>
<div class="a" style="left:769px;top:625px;width:1px;height:22px;background:#a0a0a0"></div>
<div class="a" style="left:14px;top:625px;font:bold 16px/22px 'Liberation Sans',sans-serif;color:#fff;letter-spacing:-0.07px">Historical Daily Data Daily Download Time Time Zone (List)</div>
<div class="a" style="left:500px;top:625px;font:bold 16px/22px 'Liberation Sans',sans-serif;color:#fff">New York (-5 EST/-4 EDT)</div>
<div class="a" style="left:11px;top:670px;width:1105px;height:1px;background:#a0a0a0"></div>
<div class="a" style="left:497px;top:648px;width:1px;height:22px;background:#a0a0a0"></div>
<div class="a" style="left:769px;top:648px;width:1px;height:22px;background:#a0a0a0"></div>
<div class="a" style="left:14px;top:648px;font:bold 16px/22px 'Liberation Sans',sans-serif;color:#fff;letter-spacing:-0.07px">Download Dividend Adjusted Historical Equities Data</div>
<div class="a" style="left:500px;top:648px;font:bold 16px/22px 'Liberation Sans',sans-serif;color:#fff">No</div>
<div class="a" style="left:11px;top:693px;width:1105px;height:1px;background:#a0a0a0"></div>
<div class="a" style="left:497px;top:671px;width:1px;height:22px;background:#a0a0a0"></div>
<div class="a" style="left:769px;top:671px;width:1px;height:22px;background:#a0a0a0"></div>
<div class="a" style="left:14px;top:671px;font:bold 16px/22px 'Liberation Sans',sans-serif;color:#fff;letter-spacing:-0.07px">Download Total Volume for All Contracts for Futures Daily Data</div>
<div class="a" style="left:500px;top:671px;font:bold 16px/22px 'Liberation Sans',sans-serif;color:#fff">No</div>
<div class="a" style="left:11px;top:716px;width:1105px;height:1px;background:#a0a0a0"></div>
<div class="a" style="left:497px;top:694px;width:1px;height:22px;background:#a0a0a0"></div>
<div class="a" style="left:769px;top:694px;width:1px;height:22px;background:#a0a0a0"></div>
<div class="a" style="left:14px;top:694px;font:bold 16px/22px 'Liberation Sans',sans-serif;color:#fff;letter-spacing:-0.07px">Maximum Historical Days To Download For Daily Data</div>
<div class="a" style="left:500px;top:694px;font:bold 16px/22px 'Liberation Sans',sans-serif;color:#fff">18250</div>
<div class="a" style="left:10px;top:760px;width:276px;height:29px;background:#f0f0f0;border-left:1px solid #fff;border-top:1px solid #fff;border-right:1px solid #696969;border-bottom:1px solid #696969;box-shadow:inset -1px -1px 0 #a0a0a0;text-align:center;font:bold 16px/28px 'Liberation Sans',sans-serif;color:#000">OK</div>
<div class="a" style="left:286px;top:760px;width:276px;height:29px;background:#f0f0f0;border-left:1px solid #fff;border-top:1px solid #fff;border-right:1px solid #696969;border-bottom:1px solid #696969;box-shadow:inset -1px -1px 0 #a0a0a0;text-align:center;font:bold 16px/28px 'Liberation Sans',sans-serif;color:#000">Cancel</div>
<div class="a" style="left:562px;top:760px;width:276px;height:29px;background:#f0f0f0;border-left:1px solid #fff;border-top:1px solid #fff;border-right:1px solid #696969;border-bottom:1px solid #696969;box-shadow:inset -1px -1px 0 #a0a0a0;text-align:center;font:bold 16px/28px 'Liberation Sans',sans-serif;color:#000">Revert All</div>
<div class="a" style="left:838px;top:760px;width:278px;height:29px;background:#f0f0f0;border-left:1px solid #fff;border-top:1px solid #fff;border-right:1px solid #696969;border-bottom:1px solid #696969;box-shadow:inset -1px -1px 0 #a0a0a0;text-align:center;font:bold 16px/28px 'Liberation Sans',sans-serif;color:#000">Apply All</div>
</div>
</body></html>
